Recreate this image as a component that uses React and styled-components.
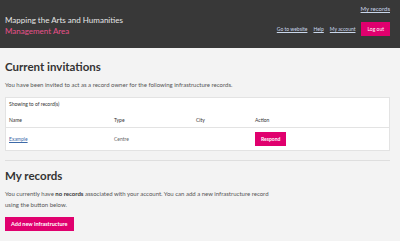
import styled, { createGlobalStyle } from "styled-components";

const GlobalStyle = createGlobalStyle`
  body {
    margin: 0;
    background: #f3f3f3;
    font-family: "Lato", "Liberation Sans", sans-serif;
    color: #444;
  }
`;

const Header = styled.header`
  background: #383838;
  height: 48px;
  padding: 0 10px 0 5px;
  display: flex;
  justify-content: space-between;
  align-items: flex-start;
  box-sizing: border-box;
`;

const Brand = styled.div`
  padding-top: 15px;
  font-size: 8px;
  line-height: 11px;
  color: #e6e6e6;
`;

const BrandSub = styled.div`
  color: #e8508a;
`;

const HeaderRight = styled.div`
  display: flex;
  flex-direction: column;
  align-items: flex-end;
  padding-top: 5px;
`;

const TopLink = styled.a`
  font-size: 6px;
  color: #c9d6ea;
  text-decoration: underline;
  margin-bottom: 10px;
`;

const Nav = styled.nav`
  display: flex;
  align-items: center;
  gap: 6px;
`;

const NavLink = styled.a`
  font-size: 5px;
  color: #c9d6ea;
  text-decoration: underline;
`;

const PinkButton = styled.button`
  background: #e0006e;
  color: #fff;
  border: none;
  font-family: inherit;
  font-weight: ${(p) => (p.$bold ? 700 : 400)};
  font-size: ${(p) => p.$size || "5px"};
  padding: ${(p) => p.$pad || "4px 6px"};
  margin-top: ${(p) => p.$top || "0"};
  cursor: pointer;
`;

const Main = styled.main`
  padding: 0 10px 0 5px;
`;

const Heading = styled.h2`
  margin: ${(p) => p.$margin || "0"};
  font-size: 11.5px;
  font-weight: 700;
  color: #333;
  line-height: 16px;
`;

const Text = styled.p`
  margin: 0;
  max-width: ${(p) => p.$max || "none"};
  font-size: 6px;
  line-height: 11px;
  color: #555;

  b {
    color: #333;
  }
`;

const Card = styled.div`
  background: #fff;
  border: 1px solid #e3e3e3;
  margin-top: 7px;
  font-size: 5px;
  color: #333;
`;

const Showing = styled.div`
  padding: 3px 3px 0;
  height: 14px;
  box-sizing: border-box;
`;

const Row = styled.div`
  display: grid;
  grid-template-columns: 105px 82px 59px 1fr;
  align-items: center;
  padding: 0 3px;
  height: ${(p) => p.$h};
  border-bottom: ${(p) => (p.$line ? "1px solid #e3e3e3" : "none")};
  color: ${(p) => p.$color || "#333"};
`;

const RecordLink = styled.a`
  color: #3d6aa8;
  text-decoration: underline;
`;

const Divider = styled.hr`
  border: none;
  border-top: 1px solid #dedede;
  margin: 9px 0 7px;
`;

export default function App() {
  return (
    <>
      <GlobalStyle />
      <Header>
        <Brand>
          <div>Mapping the Arts and Humanities</div>
          <BrandSub>Management Area</BrandSub>
        </Brand>
        <HeaderRight>
          <TopLink>My records</TopLink>
          <Nav>
            <NavLink>Go to website</NavLink>
            <NavLink>Help</NavLink>
            <NavLink>My account</NavLink>
            <PinkButton>Log out</PinkButton>
          </Nav>
        </HeaderRight>
      </Header>
      <Main>
        <Heading $margin="11px 0 4px">Current invitations</Heading>
        <Text>
          You have been invited to act as a record owner for the following
          infrastructure records.
        </Text>
        <Card>
          <Showing>Showing to of record(s)</Showing>
          <Row $h="15px" $line>
            <span>Name</span>
            <span>Type</span>
            <span>City</span>
            <span>Action</span>
          </Row>
          <Row $h="22px" $color="#666">
            <span>
              <RecordLink>Example</RecordLink>
            </span>
            <span>Centre</span>
            <span></span>
            <span>
              <PinkButton $bold>Respond</PinkButton>
            </span>
          </Row>
        </Card>
        <Divider />
        <Heading $margin="0 0 4px">My records</Heading>
        <Text $max="272px">
          You currently have <b>no records</b> associated with your account.
          You can add a new infrastructure record using the button below.
        </Text>
        <PinkButton $bold $size="5.5px" $top="4px">
          Add new infrastructure
        </PinkButton>
      </Main>
    </>
  );
}
